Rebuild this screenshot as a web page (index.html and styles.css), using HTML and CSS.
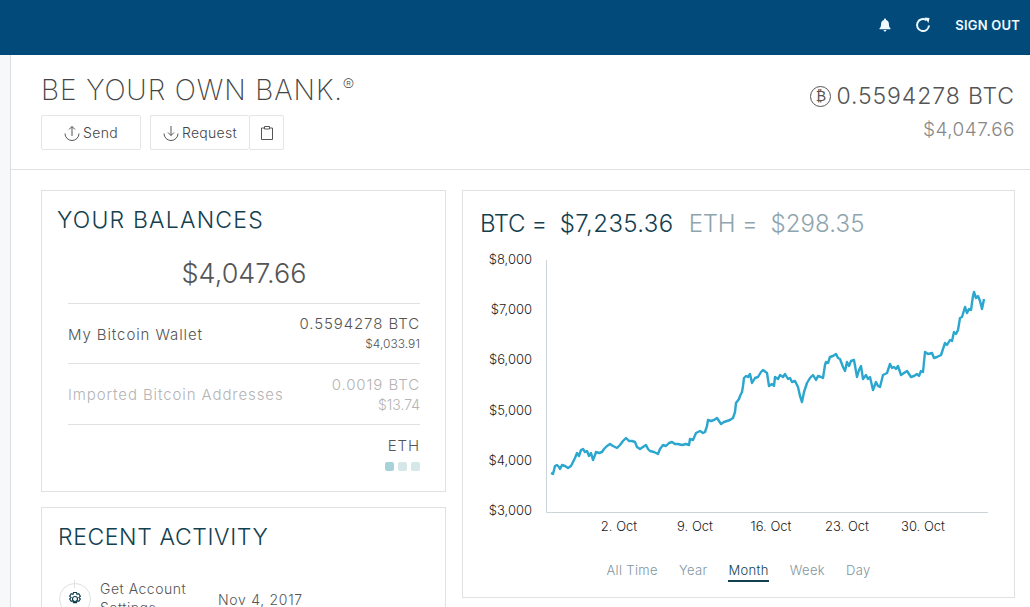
FILE: index.html
```html
<!DOCTYPE html>
<html lang="en">
<head>
  <meta charset="UTF-8">
  <title>Be Your Own Bank</title>
  <link rel="stylesheet" href="styles.css">
</head>
<body>

<div class="topbar">
  <svg class="bell" viewBox="0 0 12 14" width="12" height="14"><path fill="currentColor" d="M6 0.5c.6 0 1 .4 1 1v.4c1.9.5 2.9 2 2.9 4 0 2.400.7 3.500 1.600 4.300v1H.5v-1c.9-.8 1.600-1.900 1.600-4.300 0-2 1-3.500 2.900-4v-.4c0-.6.4-1 1-1zM4.600 12h2.800c0 .9-.6 1.500-1.400 1.500S4.600 12.900 4.600 12z"/></svg>
  <svg class="refresh" viewBox="0 0 16 16" width="16" height="16"><path fill="none" stroke="currentColor" stroke-width="2" d="M11.500 3.200a6 6 0 1 0 2.500 5.300"/><path fill="currentColor" d="M9.500 0.500l5 .5-1 5z"/></svg>
  <span class="signout">SIGN OUT</span>
</div>

<div class="page">
  <div class="sidebar"></div>
  <div class="main">

    <div class="header">
      <div class="header-left">
        <h1>BE YOUR OWN BANK.<sup>®</sup></h1>
        <div class="actions">
          <button class="btn btn-send">
            <svg viewBox="0 0 16 16" width="16" height="16"><path class="ico" d="M1 8.500a7 7 0 0 0 14 0M8 11V1.500M5 4.500l3-3 3 3"/></svg>
            Send
          </button>
          <div class="btn-group">
            <button class="btn btn-request">
              <svg viewBox="0 0 16 16" width="16" height="16"><path class="ico" d="M1 8.500a7 7 0 0 0 14 0M8 1v9.500M5 7.500l3 3 3-3"/></svg>
              Request
            </button>
            <button class="btn btn-clip">
              <svg viewBox="0 0 14 16" width="14" height="16"><path class="ico" d="M4.500 3H1.500v11.500h11V3h-3M4.500 1.500h5V4h-5z"/></svg>
            </button>
          </div>
        </div>
      </div>
      <div class="header-right">
        <div class="total-btc"><span class="btc-mark">₿</span>0.5594278 BTC</div>
        <div class="total-usd">$4,047.66</div>
      </div>
    </div>

    <div class="columns">
      <div class="col-left">
        <div class="card balances">
          <h2>YOUR BALANCES</h2>
          <div class="balance-total">$4,047.66</div>
          <div class="balance-row">
            <span class="row-label">My Bitcoin Wallet</span>
            <div class="row-values">
              <div class="row-amount">0.5594278 BTC</div>
              <div class="row-fiat small">$4,033.91</div>
            </div>
          </div>
          <div class="balance-row muted">
            <span class="row-label">Imported Bitcoin Addresses</span>
            <div class="row-values">
              <div class="row-amount">0.0019 BTC</div>
              <div class="row-fiat">$13.74</div>
            </div>
          </div>
          <div class="balance-eth">
            <div class="row-amount">ETH</div>
            <div class="dots"><i class="dot on"></i><i class="dot"></i><i class="dot"></i></div>
          </div>
        </div>

        <div class="card activity">
          <h2>RECENT ACTIVITY</h2>
          <div class="activity-item">
            <div class="activity-icon">
              <svg viewBox="0 0 16 16" width="16" height="16"><circle class="ico-dark" cx="8" cy="8" r="2.500"/><path class="ico-dark" d="M6.500 1.500h3l.5 1.800 1.800-.6 1.500 2.400-1.300 1.400 1.300 1.500-1.500 2.400-1.800-.6-.5 1.900h-3l-.5-1.900-1.800.6-1.500-2.400 1.300-1.500L2.700 5.100l1.500-2.400 1.800.6z"/></svg>
            </div>
            <div class="activity-text">Get Account Settings</div>
            <div class="activity-date">Nov 4, 2017</div>
          </div>
        </div>
      </div>

      <div class="card prices">
        <div class="price-head">
          <span>BTC =</span><span class="price-val">$7,235.36</span>
          <span class="eth">ETH =</span><span class="price-val eth">$298.35</span>
        </div>
        <svg class="chart" viewBox="480 250 520 285" width="520" height="285">
          <path class="axis" d="M546.500 260V512.500H988"/>
          <g class="tick-y">
            <text x="532" y="264">$8,000</text>
            <text x="532" y="314">$7,000</text>
            <text x="532" y="364">$6,000</text>
            <text x="532" y="415">$5,000</text>
            <text x="532" y="465">$4,000</text>
            <text x="532" y="515">$3,000</text>
          </g>
          <g class="tick-x">
            <text x="619" y="531">2. Oct</text>
            <text x="695" y="531">9. Oct</text>
            <text x="771" y="531">16. Oct</text>
            <text x="847" y="531">23. Oct</text>
            <text x="923" y="531">30. Oct</text>
          </g>
          <polyline class="line" points="551,473 553,474 555,466 557,465 559,467 560,469 562,465 565,466 568,468 571,466 573,462 575,458 577,453 579,456 581,450 583,449 585,452 587,451 589,456 591,453 593,460 595,455 596,452 599,453 602,452 604,449 607,446 610,444 613,446 617,448 620,445 623,441 626,438 629,441 632,441 635,442 637,447 640,449 643,447 646,445 648,449 650,451 654,452 658,454 660,449 663,445 666,446 669,443 672,442 675,444 678,444 682,445 686,444 689,445 690,439 693,440 696,433 700,431 703,433 705,432 707,426 708,420 711,421 714,420 717,418 719,421 721,424 724,422 727,421 730,420 733,418 735,412 736,403 739,399 740,396 742,392 743,386 744,378 746,376 748,377 750,374 752,383 755,378 758,377 761,372 763,370 767,373 769,386 772,384 774,386 775,377 778,379 780,375 783,377 785,374 788,379 790,378 792,382 795,381 798,387 800,396 802,402 804,392 807,383 810,378 813,375 816,380 818,376 821,377 823,378 825,365 826,362 828,363 830,357 833,356 836,354 838,358 840,359 843,367 845,371 847,362 849,366 851,361 854,360 857,377 859,370 861,366 863,379 866,375 868,379 870,377 873,390 876,382 878,386 880,387 883,375 885,374 887,373 890,364 892,368 894,367 896,369 898,366 901,375 904,373 907,371 909,374 911,377 914,376 917,374 919,376 921,371 923,372 925,352 928,354 932,353 934,358 937,357 941,355 943,349 945,343 947,345 950,340 952,341 954,332 956,334 958,330 960,318 962,317 965,307 967,313 969,309 971,310 973,296 974,292 976,298 978,296 980,301 982,309 984,299"/>
        </svg>
        <div class="ranges">
          <span>All Time</span>
          <span>Year</span>
          <span class="active">Month</span>
          <span>Week</span>
          <span>Day</span>
        </div>
      </div>
    </div>

  </div>
</div>

</body>
</html>
```

FILE: styles.css
```css
html, body {
  height: 607px;
  overflow: hidden;
}
body {
  margin: 0;
  font-family: Inter, "Open Sans", sans-serif;
  font-weight: 300;
  color: #555;
  background: #fff;
}
h1, h2 {
  margin: 0;
  font-weight: 300;
}
.topbar {
  height: 55px;
  box-sizing: border-box;
  padding: 0 10px 5px 0;
  background: #024a7a;
  color: #eefaff;
  display: flex;
  align-items: center;
  justify-content: flex-end;
}
.bell {
  margin-right: 24px;
}
.refresh {
  margin-right: 24px;
}
.signout {
  font-size: 13px;
  font-weight: 600;
  letter-spacing: 0.2px;
}
.page {
  display: flex;
}
.sidebar {
  width: 10px;
  height: 552px;
  flex-shrink: 0;
  background: #f6f8f9;
  border-right: 1px solid #dcdfe1;
}
.main {
  flex: 1;
  min-width: 0;
}
.header {
  height: 114px;
  border-bottom: 1px solid #dfe1e2;
  display: flex;
  justify-content: space-between;
  padding: 0 15px 0 30px;
}
h1 {
  font-size: 28px;
  line-height: 34px;
  margin-top: 18px;
  font-weight: 200;
  letter-spacing: 0.9px;
  color: #444;
}
h1 sup {
  font-size: 17px;
  line-height: 0;
  vertical-align: 9px;
}
.actions {
  display: flex;
  gap: 9px;
  margin-top: 8px;
}
.btn {
  height: 35px;
  background: #fff;
  border: 1px solid #e3e5e6;
  border-radius: 2px;
  font-family: inherit;
  font-size: 14px;
  font-weight: 300;
  letter-spacing: 0.3px;
  color: #444;
  display: flex;
  align-items: center;
  justify-content: center;
  gap: 3px;
  padding: 0;
}
.btn-send {
  width: 100px;
}
.btn-group {
  display: flex;
}
.btn-request {
  width: 99px;
  border-right: none;
}
.btn-clip {
  width: 35px;
}
.ico {
  fill: none;
  stroke: #555;
  stroke-width: 1;
}
.header-right {
  text-align: right;
  padding-top: 27px;
}
.total-btc {
  font-size: 23px;
  line-height: 28px;
  letter-spacing: 0.9px;
  display: flex;
  align-items: center;
  justify-content: flex-end;
  gap: 5px;
}
.btc-mark {
  width: 19px;
  height: 19px;
  border: 1px solid #555;
  border-radius: 50%;
  font-family: "DejaVu Sans", sans-serif;
  font-size: 14px;
  line-height: 19px;
  letter-spacing: 0;
  text-align: center;
}
.total-usd {
  font-size: 19px;
  line-height: 24px;
  margin-top: 8px;
  letter-spacing: 0.45px;
  color: #888;
}
.columns {
  display: flex;
  gap: 16px;
  padding: 20px 15px 0 30px;
}
.col-left {
  width: 405px;
  flex-shrink: 0;
  display: flex;
  flex-direction: column;
  gap: 15px;
}
.card {
  background: #fff;
  border: 1px solid #dfe1e2;
  box-sizing: border-box;
}
h2 {
  font-size: 23px;
  line-height: 28px;
  font-weight: 300;
  color: #12404f;
}
.balances {
  height: 302px;
  padding: 15px 25px 0 26px;
}
.balances h2 {
  margin-left: -11px;
  letter-spacing: 1.2px;
}
.balance-total {
  font-size: 27px;
  line-height: 34px;
  text-align: center;
  margin-top: 23px;
  padding-bottom: 12px;
}
.balance-row {
  height: 60px;
  border-top: 1px solid #dfe1e2;
  display: flex;
  justify-content: space-between;
  align-items: center;
  box-sizing: border-box;
  padding-top: 1px;
}
.balance-row.muted {
  height: 61px;
}
.row-label {
  font-size: 15px;
  letter-spacing: 0.9px;
}
.row-values {
  text-align: right;
}
.row-amount {
  font-size: 15px;
  line-height: 20px;
  letter-spacing: 0.9px;
}
.row-fiat {
  font-size: 14px;
  line-height: 20px;
}
.row-fiat.small {
  font-size: 12px;
}
.muted {
  color: #b4b4b4;
}
.balance-eth {
  border-top: 1px solid #dfe1e2;
  text-align: right;
  padding-top: 11px;
}
.dots {
  display: flex;
  justify-content: flex-end;
  gap: 4px;
  margin-top: 6px;
}
.dot {
  width: 9px;
  height: 9px;
  border-radius: 2px;
  background: #d6e7ea;
}
.dot.on {
  background: #a8d2da;
}
.activity {
  height: 200px;
  padding: 15px 16px 0;
}
.activity h2 {
  letter-spacing: 0.6px;
}
.activity-item {
  display: flex;
  align-items: center;
  margin-top: 30px;
  margin-left: 1px;
}
.activity-icon {
  position: relative;
  width: 30px;
  height: 30px;
  border: 1px solid #dfe1e2;
  border-radius: 50%;
  display: flex;
  align-items: center;
  justify-content: center;
  flex-shrink: 0;
}
.activity-icon::before {
  content: "";
  position: absolute;
  left: 14px;
  top: -4px;
  width: 1px;
  height: 8px;
  background: #dfe1e2;
}
.ico-dark {
  fill: none;
  stroke: #12404f;
  stroke-width: 1.200;
}
.activity-text {
  width: 100px;
  margin-left: 9px;
  font-size: 14px;
  line-height: 19px;
  letter-spacing: 0.5px;
  margin-top: -2px;
}
.activity-date {
  margin-left: 18px;
  font-size: 14px;
  letter-spacing: 0.7px;
}
.prices {
  width: 553px;
  height: 408px;
  padding: 17px 0 0 17px;
  flex-shrink: 0;
}
.price-head {
  font-size: 24px;
  line-height: 32px;
  font-weight: 300;
  color: #12404f;
  display: flex;
  gap: 13px;
}
.price-head span:first-child {
  letter-spacing: -0.4px;
}
.price-val {
  letter-spacing: 0.4px;
}
.eth {
  color: #8fa5ad;
}
.price-head .eth:nth-child(3) {
  margin-left: 2px;
  letter-spacing: -0.2px;
}
.price-val.eth {
  letter-spacing: 0.1px;
}
.chart {
  display: block;
  margin-top: 10px;
}
.axis {
  fill: none;
  stroke: #ccd4d8;
  stroke-width: 1;
}
.tick-y text, .tick-x text {
  font-size: 13px;
  font-weight: 300;
  fill: #222;
}
.tick-y text {
  text-anchor: end;
}
.tick-x text {
  text-anchor: middle;
}
.line {
  fill: none;
  stroke: #2ba6cf;
  stroke-width: 2.400;
  stroke-linejoin: round;
}
.ranges {
  display: flex;
  justify-content: center;
  gap: 21px;
  margin-top: 27px;
  padding-right: 17px;
  font-size: 13px;
  letter-spacing: 0.35px;
  font-weight: 300;
  color: #7f959d;
}
.ranges span {
  padding-bottom: 2px;
}
.ranges .active {
  color: #12404f;
  border-bottom: 2px solid #12404f;
}
```
